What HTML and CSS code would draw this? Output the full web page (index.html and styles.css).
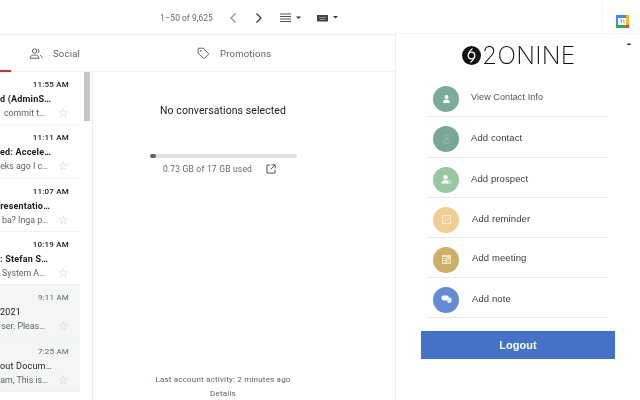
FILE: index.html
```html
<!DOCTYPE html>
<html lang="en">
<head>
<meta charset="utf-8">
<title>Inbox</title>
<link rel="stylesheet" href="styles.css">
</head>
<body>
<div class="app">
  <header class="topbar">
    <div class="pager">
      <span class="count">1–50 of 9,625</span>
      <svg class="chev" width="8" height="12" viewBox="0 0 8 12"><path d="M6.500 1.500 2 6l4.500 4.500" fill="none" stroke="#8a8a8a" stroke-width="1.100"/></svg>
      <svg class="chev next" width="8" height="12" viewBox="0 0 8 12"><path d="M1.500 1.500 6 6l-4.500 4.500" fill="none" stroke="#333" stroke-width="1.200"/></svg>
      <svg class="density" width="22" height="10" viewBox="0 0 22 10"><path d="M0 1h11M0 3.500h11M0 6h11M0 8.500h11" stroke="#555" stroke-width="1.100"/><path d="M16 3.500h5L18.500 6z" fill="#333"/></svg>
      <svg class="keyboard" width="21" height="8" viewBox="0 0 21 8"><rect x="0" y="1" width="11" height="6.500" fill="#444"/><path d="M2 3.500h7M3 5.500h5" stroke="#aaa" stroke-width=".8"/><path d="M16 2h5l-2.500 2.500z" fill="#333"/></svg>
    </div>
    <div class="addons">
      <svg width="13" height="13" viewBox="0 0 13 13"><rect width="13" height="13" fill="#4285f4"/><rect x="10" width="3" height="10" fill="#fbbc04"/><rect y="10" width="10" height="3" fill="#34a853"/><rect x="10" y="10" width="3" height="3" fill="#ea4335"/><rect x="2" y="3" width="8" height="7" fill="#fff"/><path d="M4 5h1.500v3M7 5h1v3" stroke="#4285f4" stroke-width=".8" fill="none"/></svg>
    </div>
  </header>
  <div class="workspace">
    <div class="mail">
      <nav class="tabs">
        <div class="tab-primary"><span class="tab-mark"></span></div>
        <div class="tab tab-social">
          <svg width="14" height="11" viewBox="0 0 14 11"><circle cx="5.500" cy="3" r="2.200" fill="none" stroke="#666"/><path d="M1 10.300c0-2.300 2-3.300 4.500-3.300S10 8 10 10.300z" fill="none" stroke="#666"/><path d="M8.500 1a2.200 2.200 0 0 1 0 4.200M11 7.300c1.300.5 2 1.400 2 3" fill="none" stroke="#666"/></svg>
          <span>Social</span>
        </div>
        <div class="tab tab-promotions">
          <svg width="13" height="13" viewBox="0 0 13 13"><path d="M1.200 1.200h5l5.600 5.600-5 5-5.600-5.600z" fill="none" stroke="#666"/><circle cx="3.700" cy="3.700" r=".8" fill="#666"/></svg>
          <span>Promotions</span>
        </div>
      </nav>
      <div class="content">
        <section class="list">
          <article class="row unread">
            <div class="time">11:55 AM</div>
            <div class="subject">d (AdminS…</div>
            <div class="snippet-line short"><span>commit t…</span><span class="star">☆</span></div>
          </article>
          <article class="row unread">
            <div class="time">11:11 AM</div>
            <div class="subject">ed: Accele…</div>
            <div class="snippet-line"><span>eks ago I c…</span><span class="star">☆</span></div>
          </article>
          <article class="row unread">
            <div class="time">11:07 AM</div>
            <div class="subject">resentatio…</div>
            <div class="snippet-line"><span>ba? Inga p…</span><span class="star">☆</span></div>
          </article>
          <article class="row unread">
            <div class="time">10:19 AM</div>
            <div class="subject subject-short">: Stefan S…</div>
            <div class="snippet-line short"><span>System A…</span><span class="star">☆</span></div>
          </article>
          <article class="row read">
            <div class="time">9:11 AM</div>
            <div class="subject subject-left">2021</div>
            <div class="snippet-line short"><span>ser. Pleas…</span><span class="star">☆</span></div>
          </article>
          <article class="row read">
            <div class="time">7:25 AM</div>
            <div class="subject">out Docum…</div>
            <div class="snippet-line"><span>am, This is…</span><span class="star">☆</span></div>
          </article>
        </section>
        <div class="scrollbar"><div class="thumb"></div></div>
        <section class="pane">
          <h1 class="empty">No conversations selected</h1>
          <div class="storage"><div class="storage-fill"></div></div>
          <div class="usage">
            <span>0.73 GB of 17 GB used</span>
            <svg width="10" height="10" viewBox="0 0 10 10"><path d="M4 1H1v8h8V6M5.500 .8h3.700v3.700M9 1 4.500 5.500" fill="none" stroke="#555"/></svg>
          </div>
          <footer class="activity">
            <div>Last account activity: 2 minutes ago</div>
            <div class="details">Details</div>
          </footer>
        </section>
      </div>
    </div>
  </div>
  <aside class="panel">
    <span class="minimize">-</span>
    <div class="logo">
      <svg width="19" height="19" viewBox="0 0 19 19"><circle cx="9.500" cy="9.500" r="9.500" fill="#111"/><circle cx="9.500" cy="9.500" r="3.300" fill="none" stroke="#fff" stroke-width="1.300"/><path d="M10.500 2.500C8.500 4 6.800 6 6.200 9M8.500 16.500c2-1.500 3.700-3.500 4.300-6.500" fill="none" stroke="#fff" stroke-width="1.100"/></svg>
      <span class="logo-text">2ONINE</span>
    </div>
    <ul class="actions">
      <li class="action">
        <span class="badge teal"><svg width="9" height="8" viewBox="0 0 10 9"><circle cx="5" cy="2.300" r="2.200" fill="#fff"/><path d="M1 9c0-3 1.800-4 4-4s4 1 4 4z" fill="#fff"/></svg></span>
        <span class="label label-view label-up">View Contact Info</span>
      </li>
      <li class="action action-tall">
        <span class="badge teal-dark"><svg width="9" height="10" viewBox="0 0 10 11"><circle cx="5" cy="3" r="2" fill="none" stroke="#a6c7bc" stroke-width=".7"/><path d="M1.500 10c0-2.600 1.500-3.800 3.500-3.800s3.500 1.200 3.500 3.800z" fill="none" stroke="#a6c7bc" stroke-width=".7"/></svg></span>
        <span class="label label-up">Add contact</span>
      </li>
      <li class="action">
        <span class="badge green"><svg width="11" height="9" viewBox="0 0 11 9"><circle cx="4.500" cy="2.300" r="2.200" fill="#fff"/><path d="M.5 8.500c0-2.700 1.800-3.500 4-3.500s3 .8 3 3.500z" fill="#fff"/><circle cx="8.700" cy="7" r="1.500" fill="none" stroke="#fff" stroke-width=".6"/></svg></span>
        <span class="label">Add prospect</span>
      </li>
      <li class="action shifted">
        <span class="badge sand"><svg width="9" height="9" viewBox="0 0 9 9"><rect x=".5" y=".5" width="8" height="8" fill="none" stroke="#fbeed2" stroke-width=".9"/><path d="M2.500 4.500 4 6l2.800-3" fill="none" stroke="#fbeed2" stroke-width=".8"/></svg></span>
        <span class="label">Add reminder</span>
      </li>
      <li class="action shifted">
        <span class="badge gold"><svg width="9" height="9" viewBox="0 0 9 9"><rect width="9" height="9" fill="#f1e6c4"/><path d="M1 2.500h4M1 4.500h2.500M5 5h3M1 6.800h2.500M5 7h3" stroke="#b99d53" stroke-width=".9"/></svg></span>
        <span class="label label-up">Add meeting</span>
      </li>
      <li class="action shifted">
        <span class="badge blue"><svg width="11" height="9" viewBox="0 0 12 10"><rect x=".5" y=".5" width="8" height="5.500" rx="2" fill="#fff"/><path d="M7 3h3.500a1 1 0 0 1 1 1v3L10.500 8.500H7z" fill="#e6ecf8"/></svg></span>
        <span class="label">Add note</span>
      </li>
    </ul>
    <button class="logout" type="button">Logout</button>
  </aside>
</div>
</body>
</html>
```
FILE: styles.css
```css
* { box-sizing: border-box; }
html, body { margin: 0; padding: 0; }
body {
  width: 640px;
  height: 400px;
  overflow: hidden;
  background: #fff;
  font-family: Roboto, "Liberation Sans", sans-serif;
  color: #202124;
}
.app { position: relative; width: 640px; height: 400px; overflow: hidden; filter: blur(.3px); }

.topbar {
  display: flex;
  height: 35px;
  border-bottom: 1px solid #eeeeee;
}
.pager {
  width: 603px;
  display: flex;
  align-items: center;
  padding: 2px 0 0 160px;
  border-right: 1px solid #f6f6f6;
}
.count { font-size: 8.500px; color: #6b6b6b; width: 69px; white-space: nowrap; }
.chev.next { margin-left: 18px; }
.density { margin-left: 17px; }
.keyboard { margin-left: 15px; }
.addons { flex: 1; display: flex; padding: 15px 0 0 13px; }

.tabs {
  display: flex;
  height: 37px;
  width: 395px;
  border-bottom: 1px solid #f1f1f1;
}
.tab-primary { width: 11px; position: relative; }
.tab-mark { position: absolute; left: 0; right: 0; bottom: -1px; height: 2px; background: #d93025; }
.tab {
  display: flex;
  align-items: center;
  gap: 10px;
  font-size: 9.500px;
  color: #5f6368;
  letter-spacing: .2px;
}
.tab-social { width: 178px; padding-left: 18px; }
.tab-promotions { padding-left: 8px; gap: 10px; }

.content { display: flex; height: 329px; }
.list { width: 80px; flex: none; overflow: hidden; }
.row {
  height: 53.333px;
  padding: 7px 11px 0 0;
  border-bottom: 1px solid #f0f0f0;
  text-align: right;
}
.row.read { background: #f4f6f6; }
.time { font-size: 8px; line-height: 11px; font-weight: 500; color: #202124; letter-spacing: .2px; }
.read .time { font-weight: 400; color: #5f6368; }
.subject {
  font-size: 9px;
  line-height: 13px;
  margin-top: 3px;
  padding-right: 19px;
  font-weight: 700;
  white-space: nowrap;
  letter-spacing: .2px;
}
.read .subject { font-weight: 400; }
.subject-short { padding-right: 21px; }
.subject-left { padding-right: 51px; }
.snippet-line {
  display: flex;
  justify-content: flex-end;
  align-items: center;
  gap: 10px;
  height: 14px;
  font-size: 8.800px;
  color: #5f6368;
  white-space: nowrap;
}
.snippet-line.short { gap: 13px; }
.star { font-size: 12px; color: #c8c8c8; width: 11px; line-height: 14px; }

.scrollbar { width: 13px; flex: none; padding-left: 4px; border-right: 1px solid #ececec; }
.thumb { width: 6px; height: 49px; background: #c4c4c4; }

.pane {
  width: 260px;
  flex: none;
  display: flex;
  flex-direction: column;
  align-items: center;
  padding-top: 32px;
}
.empty { margin: 0; font-size: 10.500px; line-height: 13px; font-weight: 400; color: #202124; letter-spacing: .08px; }
.storage { width: 147px; height: 4px; margin-top: 37px; background: #dddfe2; border-radius: 2px; }
.storage-fill { width: 6px; height: 4px; background: #5f6368; border-radius: 2px; }
.usage {
  display: flex;
  align-items: center;
  gap: 14px;
  margin: 5px 7px 0 0;
  font-size: 8.500px;
  line-height: 12px;
  color: #6b6b6b;
  letter-spacing: .2px;
}
.activity {
  margin-top: auto;
  padding-bottom: 1px;
  text-align: center;
  font-size: 8px;
  line-height: 13.500px;
  color: #5f6368;
  letter-spacing: .2px;
}

.panel {
  position: absolute;
  left: 395px;
  top: 33px;
  right: 0;
  bottom: 0;
  background: #fff;
  border-left: 1px solid #eeeeee;
  border-top: 1px solid #f2f2f2;
  padding: 12px 25px 0 26px;
  font-family: "Liberation Sans", Arial, sans-serif;
}
.minimize { position: absolute; top: 3px; right: 9px; font-size: 12px; font-weight: 700; color: #222; }
.logo { display: flex; align-items: center; gap: 1px; height: 19px; padding-left: 40px; }
.logo-text {
  font-family: Inter, "Liberation Sans", sans-serif;
  font-weight: 200;
  font-size: 24.500px;
  line-height: 19px;
  letter-spacing: .3px;
  color: #111;
}
.actions { list-style: none; margin: 12px 7px 0 5px; padding: 0; }
.action {
  display: flex;
  align-items: center;
  height: 40px;
  padding: 4px 0 0 6px;
  border-bottom: 1px solid #e8e8e8;
  font-size: 9.500px;
  color: #3a3a3a;
}
.action-tall { height: 41px; }
.action .label { margin: 0 0 2px 12px; letter-spacing: .1px; }
.action.shifted .label { margin-left: 13px; }
.action .label-view { font-size: 9px; color: #555; }
.action .label-up { margin-bottom: 4px; }
.badge {
  width: 26px;
  height: 26px;
  flex: none;
  border-radius: 50%;
  display: flex;
  align-items: center;
  justify-content: center;
}
.teal { background: #7aab9b; }
.teal-dark { background: #77a796; }
.green { background: #96c8a2; }
.sand { background: #f0cd92; }
.gold { background: #cdb063; }
.blue { background: #6489d6; }
.logout {
  display: block;
  width: 194px;
  height: 28px;
  margin: 13px 0 0 -1px;
  border: 0;
  background: #4472c9;
  color: #fff;
  font-family: "Liberation Sans", Arial, sans-serif;
  font-size: 11px;
  font-weight: 700;
}
```
